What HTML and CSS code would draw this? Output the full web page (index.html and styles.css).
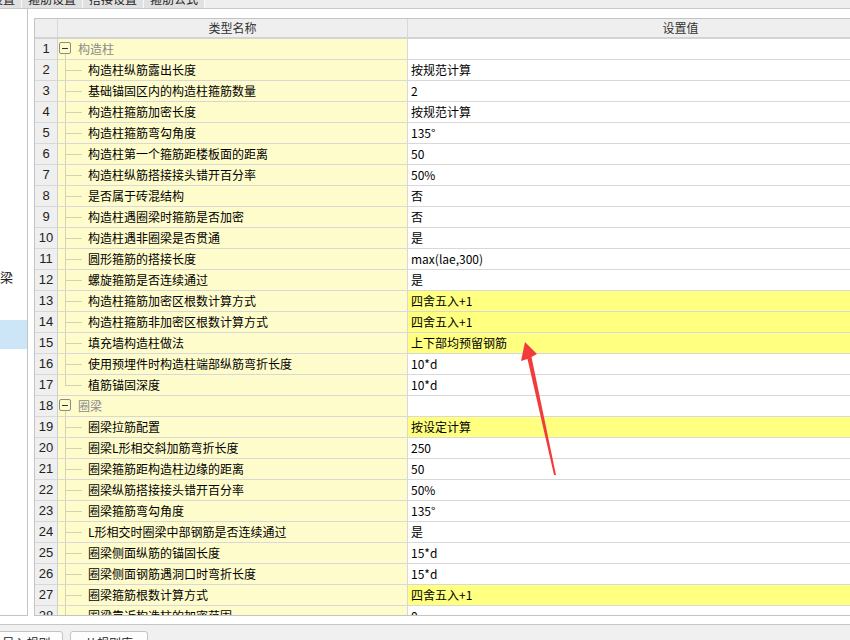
FILE: index.html
```html
<!DOCTYPE html>
<html lang="zh-CN">
<head>
<meta charset="utf-8">
<title>构造柱设置</title>
<link rel="stylesheet" href="styles.css">
</head>
<body>
<div class="tabs">
  <div class="tab first">计算设置</div>
  <div class="tab">箍筋设置</div>
  <div class="tab">搭接设置</div>
  <div class="tab">箍筋公式</div>
</div>
<div class="main">
  <div class="nav">
    <div class="nav-item">梁</div>
    <div class="nav-item"></div>
    <div class="nav-item selected"></div>
  </div>
  <div class="grid">
    <div class="hdr"><div></div><div>类型名称</div><div>设置值</div></div>
    <div class="row group"><div class="num">1</div><div class="name"><span class="toggle"></span><span class="gtext">构造柱</span></div><div class="val"></div></div>
    <div class="row"><div class="num">2</div><div class="name"><span class="branch"></span><span class="ntext">构造柱纵筋露出长度</span></div><div class="val">按规范计算</div></div>
    <div class="row"><div class="num">3</div><div class="name"><span class="branch"></span><span class="ntext">基础锚固区内的构造柱箍筋数量</span></div><div class="val">2</div></div>
    <div class="row"><div class="num">4</div><div class="name"><span class="branch"></span><span class="ntext">构造柱箍筋加密长度</span></div><div class="val">按规范计算</div></div>
    <div class="row"><div class="num">5</div><div class="name"><span class="branch"></span><span class="ntext">构造柱箍筋弯勾角度</span></div><div class="val">135°</div></div>
    <div class="row"><div class="num">6</div><div class="name"><span class="branch"></span><span class="ntext">构造柱第一个箍筋距楼板面的距离</span></div><div class="val">50</div></div>
    <div class="row"><div class="num">7</div><div class="name"><span class="branch"></span><span class="ntext">构造柱纵筋搭接接头错开百分率</span></div><div class="val">50%</div></div>
    <div class="row"><div class="num">8</div><div class="name"><span class="branch"></span><span class="ntext">是否属于砖混结构</span></div><div class="val">否</div></div>
    <div class="row"><div class="num">9</div><div class="name"><span class="branch"></span><span class="ntext">构造柱遇圈梁时箍筋是否加密</span></div><div class="val">否</div></div>
    <div class="row"><div class="num">10</div><div class="name"><span class="branch"></span><span class="ntext">构造柱遇非圈梁是否贯通</span></div><div class="val">是</div></div>
    <div class="row"><div class="num">11</div><div class="name"><span class="branch"></span><span class="ntext">圆形箍筋的搭接长度</span></div><div class="val">max(lae,300)</div></div>
    <div class="row"><div class="num">12</div><div class="name"><span class="branch"></span><span class="ntext">螺旋箍筋是否连续通过</span></div><div class="val">是</div></div>
    <div class="row"><div class="num">13</div><div class="name"><span class="branch"></span><span class="ntext">构造柱箍筋加密区根数计算方式</span></div><div class="val hl">四舍五入+1</div></div>
    <div class="row"><div class="num">14</div><div class="name"><span class="branch"></span><span class="ntext">构造柱箍筋非加密区根数计算方式</span></div><div class="val hl">四舍五入+1</div></div>
    <div class="row"><div class="num">15</div><div class="name"><span class="branch"></span><span class="ntext">填充墙构造柱做法</span></div><div class="val hl">上下部均预留钢筋</div></div>
    <div class="row"><div class="num">16</div><div class="name"><span class="branch"></span><span class="ntext">使用预埋件时构造柱端部纵筋弯折长度</span></div><div class="val">10*d</div></div>
    <div class="row"><div class="num">17</div><div class="name"><span class="branch last"></span><span class="ntext">植筋锚固深度</span></div><div class="val">10*d</div></div>
    <div class="row group"><div class="num">18</div><div class="name"><span class="toggle"></span><span class="gtext">圈梁</span></div><div class="val"></div></div>
    <div class="row"><div class="num">19</div><div class="name"><span class="branch"></span><span class="ntext">圈梁拉筋配置</span></div><div class="val hl">按设定计算</div></div>
    <div class="row"><div class="num">20</div><div class="name"><span class="branch"></span><span class="ntext">圈梁L形相交斜加筋弯折长度</span></div><div class="val">250</div></div>
    <div class="row"><div class="num">21</div><div class="name"><span class="branch"></span><span class="ntext">圈梁箍筋距构造柱边缘的距离</span></div><div class="val">50</div></div>
    <div class="row"><div class="num">22</div><div class="name"><span class="branch"></span><span class="ntext">圈梁纵筋搭接接头错开百分率</span></div><div class="val">50%</div></div>
    <div class="row"><div class="num">23</div><div class="name"><span class="branch"></span><span class="ntext">圈梁箍筋弯勾角度</span></div><div class="val">135°</div></div>
    <div class="row"><div class="num">24</div><div class="name"><span class="branch"></span><span class="ntext">L形相交时圈梁中部钢筋是否连续通过</span></div><div class="val">是</div></div>
    <div class="row"><div class="num">25</div><div class="name"><span class="branch"></span><span class="ntext">圈梁侧面纵筋的锚固长度</span></div><div class="val">15*d</div></div>
    <div class="row"><div class="num">26</div><div class="name"><span class="branch"></span><span class="ntext">圈梁侧面钢筋遇洞口时弯折长度</span></div><div class="val">15*d</div></div>
    <div class="row"><div class="num">27</div><div class="name"><span class="branch"></span><span class="ntext">圈梁箍筋根数计算方式</span></div><div class="val hl">四舍五入+1</div></div>
    <div class="row"><div class="num">28</div><div class="name"><span class="branch"></span><span class="ntext">圈梁靠近构造柱的加密范围</span></div><div class="val">0</div></div>
  </div>
</div>
<div class="footer">
  <button class="btn b1">导入规则</button>
  <button class="btn b2">从规则库</button>
</div>
<svg class="arrow" width="850" height="640" viewBox="0 0 850 640" xmlns="http://www.w3.org/2000/svg">
  <polygon points="525,342 537,354 531.5,357 556,475 554,475 527.5,359 521,361" fill="#f23c3c"/>
</svg>
</body>
</html>
```

FILE: styles.css
```css
* { box-sizing: border-box; }

body {
  margin: 0;
  width: 850px;
  height: 640px;
  overflow: hidden;
  position: relative;
  background: #f0f0f0;
  font-family: "Noto Sans CJK SC", "Noto Sans", sans-serif;
  font-size: 12px;
  color: #000;
}

/* top tab strip (clipped) */
.tabs {
  height: 9px;
  display: flex;
  overflow: hidden;
  background: #eeeeee;
  border-bottom: 1px solid #c9c9c9;
}
.tab {
  flex: none;
  margin-top: -18px;
  height: 26px;
  padding: 7px 6px 0;
  line-height: 20px;
  background: #e1e1e1;
  border-right: 1px solid #f8f8f8;
  color: #222;
}
.tab.first { margin-left: -39px; }

/* main white area */
.main {
  height: 616px;
  display: flex;
  align-items: flex-start;
  background: #fff;
  border-bottom: 1px solid #c6c6c6;
}

.nav {
  flex: none;
  width: 28px;
  height: 607px;
  border-right: 1px solid #c4c4c4;
  border-bottom: 1px solid #c4c4c4;
  padding-top: 253px;
  background: #fff;
  overflow: hidden;
}
.nav-item {
  height: 29px;
  line-height: 29px;
  font-size: 13px;
  color: #222;
  white-space: nowrap;
}
.nav-item.selected { background: #cde6f7; }

/* property grid */
.grid {
  flex: none;
  width: 940px;
  height: 598px;
  margin-top: 9px;
  margin-left: 6px;
  border: 1px solid #c4c4c4;
  border-right: none;
  overflow: hidden;
}
.hdr, .row {
  display: grid;
  grid-template-columns: 23px 350px 546px;
}
.hdr > div {
  height: 20px;
  line-height: 18px;
  background: #efefef;
  border-right: 1px solid #d8d8d8;
  border-bottom: 2px solid #d4d4d4;
  text-align: center;
  color: #333;
}
.row > div {
  height: 21px;
  line-height: 20px;
  border-bottom: 1px solid #d8d8d8;
  white-space: nowrap;
  overflow: hidden;
}
.num {
  background: #efefef;
  border-right: 1px solid #d0d0d0;
  text-align: center;
  font-family: "Liberation Sans", Arial, sans-serif;
  font-size: 13px;
  color: #222;
}
.name {
  display: flex;
  align-items: flex-start;
  background: #fffccc;
  border-right: 1px solid #d8d8d8;
}
.group .name {
  background:
    linear-gradient(#d6d3b4, #d6d3b4) 7px 15px / 1px 6px no-repeat,
    #fffccc;
}
.val {
  background: #fff;
  padding-left: 3px;
}
.val.hl { background: #ffff80; }

.branch {
  flex: none;
  width: 17px;
  height: 20px;
  margin-left: 7px;
  background:
    linear-gradient(#d6d3b4, #d6d3b4) 0 0 / 1px 100% no-repeat,
    linear-gradient(#d6d3b4, #d6d3b4) 0 10px / 17px 1px no-repeat;
}
.branch.last {
  background:
    linear-gradient(#d6d3b4, #d6d3b4) 0 0 / 1px 11px no-repeat,
    linear-gradient(#d6d3b4, #d6d3b4) 0 10px / 17px 1px no-repeat;
}
.ntext { padding-left: 6px; }

.toggle {
  flex: none;
  width: 12px;
  height: 12px;
  margin: 3px 0 0 1px;
  border: 1px solid #8c8c8c;
  border-radius: 2px;
  background: linear-gradient(#333, #333) center / 6px 1px no-repeat;
}
.gtext {
  margin-left: 7px;
  color: #8a8a8a;
}

/* bottom toolbar */
.footer {
  display: flex;
  gap: 7px;
  padding-top: 6px;
}
.btn {
  flex: none;
  height: 24px;
  padding: 0;
  border: 1px solid #c3c3c3;
  border-radius: 3px;
  background: #fdfdfd;
  font-family: "Noto Sans CJK SC", sans-serif;
  font-size: 12px;
  line-height: 22px;
  color: #222;
}
.b1 { width: 73px; margin-left: -10px; }
.b2 { width: 78px; }

.arrow {
  position: absolute;
  left: 0;
  top: 0;
  pointer-events: none;
}
```
